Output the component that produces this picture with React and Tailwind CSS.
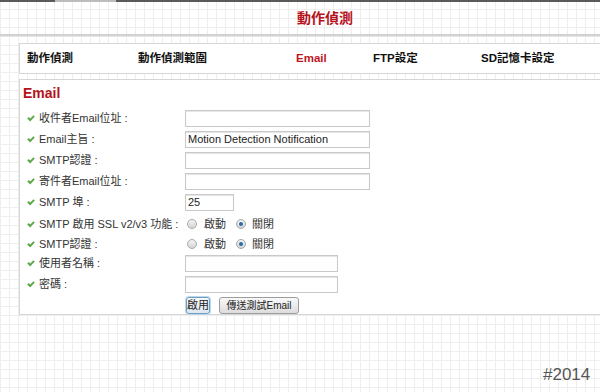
import React from 'react';

const font = { fontFamily: '"Liberation Sans", Arial, "Noto Sans CJK TC", sans-serif' };

const Check = () => (
  <svg width="8" height="7" viewBox="0 0 8 7" className="shrink-0">
    <path d="M0.2 3.4 L1.9 2.1 L3.2 3.5 L6.4 0.3 L7.8 1.6 L3.2 6.4 Z" fill="#5fa84a" />
  </svg>
);

const Radio = ({ checked }) => (
  <span className="w-[10px] h-[10px] rounded-full border border-[#a8a8a8] bg-[linear-gradient(#f4f4f4,#d4d4d4)] flex items-center justify-center shrink-0">
    {checked && <span className="w-[4px] h-[4px] rounded-full bg-[#2a6ea8]" />}
  </span>
);

const Field = ({ w = 'w-[185px]', value = '' }) => (
  <div className={`${w} h-[17px] border border-[#c9c9c9] shadow-[inset_0_1px_1px_#e4e4e4] bg-white text-[11px] text-[#222] leading-[15px] px-[2px]`}>
    {value}
  </div>
);

const OnOff = () => (
  <div className="flex items-center text-[11px] text-[#333] pl-[2px]">
    <Radio />
    <span className="ml-[7px]">啟動</span>
    <span className="ml-[10px]"><Radio checked /></span>
    <span className="ml-[6px]">關閉</span>
  </div>
);

const rows = [
  { label: '收件者Email位址 :', h: 'h-[21px]', control: <Field /> },
  { label: 'Email主旨 :', h: 'h-[21px]', control: <Field value="Motion Detection Notification" /> },
  { label: 'SMTP認證 :', h: 'h-[21px]', control: <Field /> },
  { label: '寄件者Email位址 :', h: 'h-[21px]', control: <Field /> },
  { label: 'SMTP 埠 :', h: 'h-[21px]', control: <Field w="w-[49px]" value="25" /> },
  { label: 'SMTP 啟用 SSL v2/v3 功能 :', h: 'h-[22px]', control: <OnOff /> },
  { label: 'SMTP認證 :', h: 'h-[18px]', control: <OnOff /> },
  { label: '使用者名稱 :', h: 'h-[21px]', control: <Field w="w-[153px]" /> },
  { label: '密碼 :', h: 'h-[21px]', control: <Field w="w-[153px]" /> },
];

const tabs = [
  { name: '動作偵測', w: 'w-[111px]' },
  { name: '動作偵測範圍', w: 'w-[158px]' },
  { name: 'Email', w: 'w-[77px]', active: true },
  { name: 'FTP設定', w: 'w-[108px]' },
  { name: 'SD記憶卡設定', w: 'w-[120px]' },
];

export default function App() {
  return (
    <div
      style={font}
      className="relative w-[600px] h-[392px] overflow-hidden bg-white bg-[linear-gradient(to_right,#eeeeee_1px,transparent_1px),linear-gradient(to_bottom,#eeeeee_1px,transparent_1px)] bg-[size:9px_9px]"
    >
      <div className="h-[2px] bg-[#5a5a5a] flex">
        <div className="ml-[55px] w-[61px] bg-[#bdbdbd]" />
      </div>

      <div className="h-[32px] flex items-center justify-center pl-[50px]">
        <h1 className="text-[14px] font-bold text-[#b5121b]">動作偵測</h1>
      </div>
      <div className="h-[3px] bg-[#d2d2d2] border-b border-[#e6e6e6]" />

      <div className="ml-[19px] mt-[6px] w-[600px] h-[31px] bg-white border border-[#d6d6d6] flex items-center pl-[7px]">
        {tabs.map((t) => (
          <span
            key={t.name}
            className={`${t.w} shrink-0 text-[11.5px] font-bold ${t.active ? 'text-[#c0161e]' : 'text-[#111]'}`}
          >
            {t.name}
          </span>
        ))}
      </div>

      <div className="ml-[19px] mt-[5px] w-[600px] h-[236px] bg-white border border-[#d6d6d6] pt-[4px]">
        <h2 className="pl-[3px] text-[14px] font-bold text-[#b5121b] leading-[18px]">Email</h2>
        <div className="mt-[6px]">
          {rows.map((r, i) => (
            <div key={i} className={`${r.h} flex items-center`}>
              <div className="w-[165px] flex items-center pl-[7px] gap-[4px] text-[11px] text-[#333]">
                <Check />
                <span>{r.label}</span>
              </div>
              {r.control}
            </div>
          ))}
          <div className="h-[21px] flex items-center pl-[166px] gap-[9px]">
            <button className="h-[17px] w-[24px] text-[11px] text-[#222] border border-[#6e9ec4] rounded-[3px] bg-[linear-gradient(#f6f9fb,#dfe8ef)] shadow-[0_0_0_1px_#bcd6ea] leading-none">
              啟用
            </button>
            <button className="h-[17px] w-[80px] text-[10px] text-[#222] border border-[#9c9c9c] rounded-[3px] bg-[linear-gradient(#fafafa,#dcdcdc)] leading-none">
              傳送測試Email
            </button>
          </div>
        </div>
      </div>

      <div className="absolute left-[543px] top-[362px] text-[17px] text-[#555] font-light">#2014</div>
    </div>
  );
}
